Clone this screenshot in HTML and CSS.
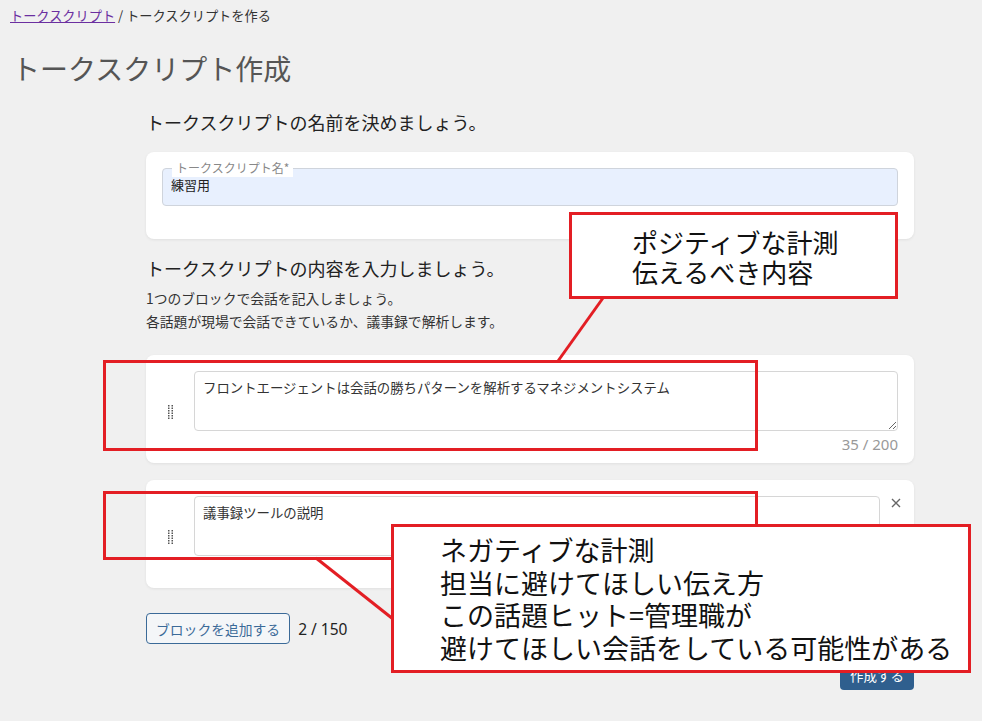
FILE: index.html
```html
<!DOCTYPE html>
<html lang="ja">
<head>
<meta charset="utf-8">
<title>トークスクリプト作成</title>
<link rel="stylesheet" href="styles.css">
</head>
<body>
<div class="page">
  <nav class="crumbs"><a href="#" class="crumb-link">トークスクリプト</a> / トークスクリプトを作る</nav>
  <h1 class="title">トークスクリプト作成</h1>
  <main class="form">
    <h2 class="sec sec-first">トークスクリプトの名前を決めましょう。</h2>
    <div class="card name-card">
      <div class="field">
        <span class="flabel">トークスクリプト名*</span>
        <input class="finput" type="text" value="練習用">
      </div>
    </div>

    <h2 class="sec sec-second">トークスクリプトの内容を入力しましょう。</h2>
    <p class="desc">1つのブロックで会話を記入しましょう。<br>各話題が現場で会話できているか、議事録で解析します。</p>

    <div class="card block">
      <svg class="handle" width="6" height="14" viewBox="0 0 6 14">
        <g fill="#555">
          <rect x="0" y="0" width="1.5" height="1.5"/><rect x="3.5" y="0" width="1.5" height="1.5"/>
          <rect x="0" y="2.5" width="1.5" height="1.5"/><rect x="3.5" y="2.5" width="1.5" height="1.5"/>
          <rect x="0" y="5" width="1.5" height="1.5"/><rect x="3.5" y="5" width="1.5" height="1.5"/>
          <rect x="0" y="7.5" width="1.5" height="1.5"/><rect x="3.5" y="7.5" width="1.5" height="1.5"/>
          <rect x="0" y="10" width="1.5" height="1.5"/><rect x="3.5" y="10" width="1.5" height="1.5"/>
          <rect x="0" y="12.5" width="1.5" height="1.5"/><rect x="3.5" y="12.5" width="1.5" height="1.5"/>
        </g>
      </svg>
      <div class="block-body">
        <textarea class="ta" readonly>フロントエージェントは会話の勝ちパターンを解析するマネジメントシステム</textarea>
        <div class="count">35 / 200</div>
      </div>
    </div>

    <div class="card block block-closable">
      <svg class="handle" width="6" height="14" viewBox="0 0 6 14">
        <g fill="#555">
          <rect x="0" y="0" width="1.5" height="1.5"/><rect x="3.5" y="0" width="1.5" height="1.5"/>
          <rect x="0" y="2.5" width="1.5" height="1.5"/><rect x="3.5" y="2.5" width="1.5" height="1.5"/>
          <rect x="0" y="5" width="1.5" height="1.5"/><rect x="3.5" y="5" width="1.5" height="1.5"/>
          <rect x="0" y="7.5" width="1.5" height="1.5"/><rect x="3.5" y="7.5" width="1.5" height="1.5"/>
          <rect x="0" y="10" width="1.5" height="1.5"/><rect x="3.5" y="10" width="1.5" height="1.5"/>
          <rect x="0" y="12.5" width="1.5" height="1.5"/><rect x="3.5" y="12.5" width="1.5" height="1.5"/>
        </g>
      </svg>
      <div class="block-body">
        <textarea class="ta" readonly>議事録ツールの説明</textarea>
        <div class="count">9 / 200</div>
      </div>
      <span class="close">
        <svg width="10" height="10" viewBox="0 0 10 10"><path d="M1 1L9 9M9 1L1 9" stroke="#666" stroke-width="1.4" fill="none"/></svg>
      </span>
    </div>

    <div class="actions">
      <button class="btn-outline" type="button">ブロックを追加する</button>
      <span class="total">2 / 150</span>
    </div>
    <div class="submit-row">
      <button class="btn-primary" type="button">作成する</button>
    </div>
  </main>

  <svg class="lines" width="982" height="721" viewBox="0 0 982 721">
    <line x1="603" y1="298" x2="558" y2="361" stroke="#e31e24" stroke-width="3"/>
    <line x1="316" y1="558" x2="393" y2="619" stroke="#e31e24" stroke-width="3"/>
  </svg>
  <div class="mark mark-a"></div>
  <div class="mark mark-b"></div>
  <div class="note note-a">ポジティブな計測<br>伝えるべき内容</div>
  <div class="note note-b">ネガティブな計測<br>担当に避けてほしい伝え方<br>この話題ヒット=管理職が<br>避けてほしい会話をしている可能性がある</div>
</div>
</body>
</html>
```

FILE: styles.css
```css
* { box-sizing: border-box; }
html, body { margin: 0; padding: 0; }
body {
  background: #f0f0f0;
  font-family: "Noto Sans CJK JP", "Noto Sans", sans-serif;
  color: #222;
}
.page {
  position: relative;
  width: 982px;
  height: 721px;
  overflow: hidden;
  padding-top: 6px;
}
.crumbs {
  margin-left: 10px;
  font-size: 13.2px;
  line-height: 20px;
  color: #333;
}
.crumb-link { color: #6b2fa0; text-decoration: underline; }
.title {
  margin: 22px 0 0 12px;
  font-size: 28px;
  line-height: 40px;
  font-weight: normal;
  color: #555;
}
.form {
  margin-left: 146px;
  width: 768px;
}
.sec {
  margin: 0;
  font-size: 18px;
  line-height: 24px;
  font-weight: normal;
  color: #222;
}
.sec-first { margin-top: 22px; }
.sec-second { margin-top: 17px; }
.desc {
  margin: 7px 0 0;
  font-size: 13.8px;
  line-height: 23px;
  color: #333;
}
.card {
  background: #fff;
  border-radius: 8px;
  box-shadow: 0 1px 3px rgba(0,0,0,0.07);
}
.name-card {
  margin-top: 18px;
  padding: 16px 16px 33px;
}
.field { position: relative; }
.finput {
  display: block;
  width: 100%;
  height: 38px;
  margin: 0;
  border: 1px solid #cfd4dc;
  border-radius: 4px;
  background: #e8f0fe;
  padding: 0 8px 6px;
  font-family: inherit;
  font-size: 13px;
  color: #222;
  outline: none;
}
.flabel {
  position: absolute;
  top: -9px;
  left: 10px;
  padding: 0 4px;
  background: #fff;
  font-size: 12px;
  line-height: 18px;
  color: #888;
  z-index: 1;
}
.block {
  display: flex;
  align-items: flex-start;
  padding: 16px 16px 9px 22px;
  gap: 20px;
}
.block + .block { margin-top: 17px; }
.form > .desc + .block { margin-top: 22px; }
.handle {
  flex: none;
  align-self: center;
  margin-top: -2px;
}
.block-body { flex: 1; display: flex; flex-direction: column; }
.ta {
  display: block;
  width: 100%;
  height: 60px;
  margin: 0;
  resize: vertical;
  border: 1px solid #d6d6d6;
  border-radius: 4px;
  padding: 6px 8px;
  font-family: inherit;
  font-size: 13.4px;
  line-height: 18px;
  color: #333;
  background: #fff;
  outline: none;
}
.count {
  margin-top: 3px;
  text-align: right;
  font-family: "Noto Sans", "Noto Sans CJK JP", sans-serif;
  font-size: 15px;
  line-height: 20px;
  color: #999;
}
.block-closable { padding-right: 10px; gap: 20px; }
.close {
  flex: none;
  width: 16px;
  height: 14px;
  margin-left: -12px;
  display: flex;
  align-items: center;
  justify-content: center;
}
.actions {
  margin-top: 25px;
  display: flex;
  align-items: center;
  gap: 8px;
}
.btn-outline {
  height: 31px;
  padding: 0 9px;
  border: 1px solid #3b6a98;
  border-radius: 4px;
  background: #f4f6f8;
  color: #3b6a98;
  font-family: inherit;
  font-size: 13.8px;
}
.total {
  font-family: "Noto Sans", "Noto Sans CJK JP", sans-serif;
  font-size: 15.5px;
  color: #222;
}
.submit-row {
  margin-top: 15px;
  display: flex;
  justify-content: flex-end;
}
.btn-primary {
  height: 31px;
  width: 74px;
  border: none;
  border-radius: 4px;
  background: #2f5f8e;
  color: #fff;
  font-family: inherit;
  font-size: 13.5px;
}

/* annotation overlay */
.lines {
  position: absolute;
  left: 0;
  top: 0;
  pointer-events: none;
}
.mark, .note {
  position: absolute;
  border: 3px solid #e31e24;
}
.mark { background: transparent; }
.mark-a { left: 103px; top: 360px; width: 655px; height: 91px; }
.mark-b { left: 103px; top: 491px; width: 655px; height: 69px; }
.note {
  background: #fff;
  color: #111;
}
.note-a {
  left: 569px; top: 212px; width: 329px; height: 87px;
  padding: 12px 0 0 60px;
  font-size: 26px;
  line-height: 30px;
}
.note-b {
  left: 391px; top: 524px; width: 580px; height: 149px;
  padding: 7px 0 0 46px;
  font-size: 27px;
  line-height: 32.5px;
}
```
